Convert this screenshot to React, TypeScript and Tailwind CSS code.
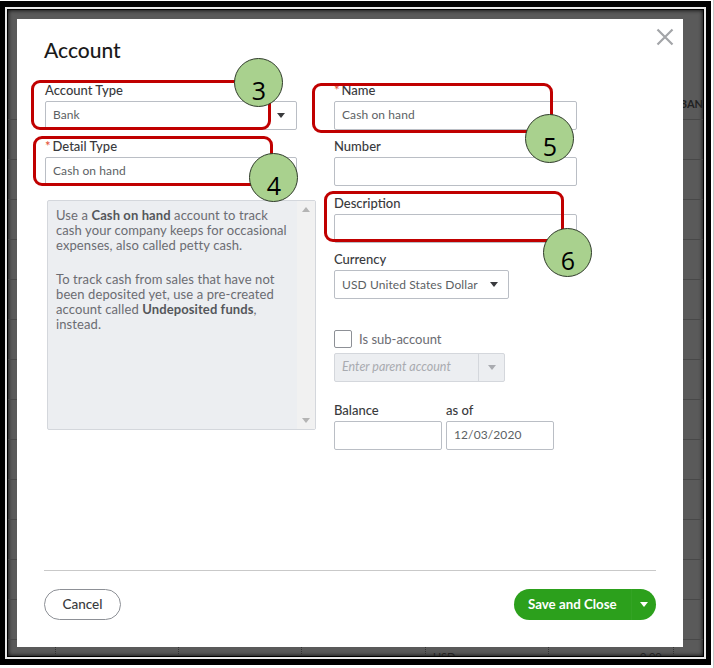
const Caret = ({ className = "" }: { className?: string }) => (
  <svg width="8" height="5" viewBox="0 0 8 5" className={className}>
    <path d="M0 0h8L4 5z" fill="currentColor" />
  </svg>
);

const Label = ({ text, required }: { text: string; required?: boolean }) => (
  <div className="h-[22px] text-[13px] leading-[22px] text-[#393a3d] font-medium whitespace-nowrap">
    {required && <span className="text-[#e2492f] mr-[2px]">*</span>}
    {text}
  </div>
);

const Input = ({ value, className = "" }: { value?: string; className?: string }) => (
  <div
    className={`h-[29px] border border-[#babec5] rounded-[2px] bg-white pl-[7px] text-[12px] tracking-[0.1px] leading-[26px] text-[#5c5f64] ${className}`}
  >
    {value}
  </div>
);

const Callout = ({ className }: { className: string }) => (
  <div className={`absolute border-[3px] border-[#c00000] rounded-[9px] ${className}`} />
);

const Badge = ({ n, className }: { n: number; className: string }) => (
  <div
    className={`absolute w-[49px] h-[49px] rounded-full bg-[#a9d18e] border border-[#2f3b2a] flex items-center justify-center pt-[15px] pl-px text-[25px] leading-none text-black font-['Open_Sans',sans-serif] ${className}`}
  >
    {n}
  </div>
);

export default function App() {
  return (
    <div className="w-[714px] h-[668px] bg-white border-r border-[#c8c8c8] pt-px pr-[2px] pb-[3px] font-['Lato',sans-serif]">
      <div className="w-full h-full bg-black pt-[6px] pr-[5px] pb-[6px] pl-[5px]">
        <div className="w-full h-full border-2 border-[#e8e8e8] bg-black p-px">
          <div className="relative w-full h-full overflow-hidden bg-[#5a5a5a] shadow-[inset_0_0_4px_#000] pl-[9px] pt-[9px]">
            {/* spreadsheet behind the overlay */}
            <div className="absolute inset-x-0 top-[109px] bottom-[8px] bg-[linear-gradient(#484848_1px,transparent_1px)] bg-[length:100%_40px]" />
            <div className="absolute right-0 top-[88px] text-[11px] font-bold text-[#222] leading-none">
              BAN
            </div>
            <div className="absolute left-[47px] bottom-0 h-[9px] border-l border-dotted border-[#333]" />
            <div className="absolute left-[170px] bottom-0 h-[9px] border-l border-dotted border-[#333]" />
            <div className="absolute left-[293px] bottom-0 h-[9px] border-l border-dotted border-[#333]" />
            <div className="absolute left-[417px] bottom-0 h-[9px] border-l border-dotted border-[#333]" />
            <div className="absolute left-[540px] bottom-0 h-[9px] border-l border-dotted border-[#333]" />
            <div className="absolute left-[665px] bottom-0 h-[9px] border-l border-dotted border-[#333]" />
            <div className="absolute left-[425px] top-[641px] text-[11px] leading-none text-[#222]">USD</div>
            <div className="absolute left-[632px] top-[641px] text-[11px] leading-none text-[#222]">0.00</div>

            <div className="relative w-[666px] h-[628px] bg-white px-[27px]">
              <svg
                width="18"
                height="18"
                viewBox="0 0 18 18"
                className="absolute right-[9px] top-[9px] text-[#a3a5a8]"
              >
                <path d="M1.5 1.5l15 15M16.5 1.5l-15 15" stroke="currentColor" strokeWidth="2.2" />
              </svg>

              <h1 className="pt-[18px] h-[60px] text-[21px] leading-[25px] font-medium text-[#1a1a1a]">
                Account
              </h1>

              <div className="flex">
                <div className="w-[253px] pl-px">
                  <Label text="Account Type" />
                  <div className="flex h-[29px] border border-[#babec5] rounded-[2px]">
                    <div className="flex-1 pl-[7px] text-[12px] tracking-[0.1px] leading-[26px] text-[#5c5f64]">Bank</div>
                    <div className="w-[30px] flex items-center justify-center text-[#393a3d]">
                      <Caret />
                    </div>
                  </div>
                  <div className="h-[5px]" />
                  <Label text="Detail Type" required />
                  <Input value="Cash on hand" />
                  <div className="ml-[2px] mt-[14px] w-[269px] h-[230px] flex border border-[#d4d7dc] rounded-[2px] bg-[#eceef1]">
                    <div className="flex-1 pl-2 pt-[7px] text-[13px] tracking-[0.1px] leading-[15px] text-[#6b6c72]">
                      <p className="whitespace-nowrap">
                        Use a <b className="font-bold text-[#55575b]">Cash on hand</b> account to track
                        <br />
                        cash your company keeps for occasional
                        <br />
                        expenses, also called petty cash.
                      </p>
                      <p className="mt-[19px] whitespace-nowrap">
                        To track cash from sales that have not
                        <br />
                        been deposited yet, use a pre-created
                        <br />
                        account called <b className="font-bold text-[#55575b]">Undeposited funds</b>,
                        <br />
                        instead.
                      </p>
                    </div>
                    <div className="w-[18px] bg-[#f1f1f1] flex flex-col items-center justify-between py-[6px] text-[#b4b4b4]">
                      <Caret className="rotate-180" />
                      <Caret />
                    </div>
                  </div>
                </div>

                <div className="ml-[37px] w-[243px]">
                  <Label text="Name" required />
                  <Input value="Cash on hand" />
                  <div className="h-[5px]" />
                  <Label text="Number" />
                  <Input />
                  <div className="h-[6px]" />
                  <Label text="Description" />
                  <Input />
                  <div className="h-[5px]" />
                  <Label text="Currency" />
                  <div className="flex items-center justify-between w-[175px] h-[29px] border border-[#babec5] rounded-[2px] pl-[7px] pr-[10px] text-[12px] tracking-[0.1px] text-[#5c5f64]">
                    USD United States Dollar
                    <Caret className="text-[#393a3d]" />
                  </div>
                  <div className="mt-[31px] flex items-center h-[18px]">
                    <div className="w-[18px] h-[18px] border border-[#8d9096] rounded-[2px] bg-white" />
                    <span className="ml-[7px] pt-[2px] text-[13px] text-[#6b6c72]">Is sub-account</span>
                  </div>
                  <div className="mt-[5px] flex w-[171px] h-[29px] border border-[#d4d7dc] rounded-[2px] bg-[#eceef1]">
                    <div className="flex-1 pl-[7px] text-[12.5px] italic leading-[26px] text-[#a9abb0]">
                      Enter parent account
                    </div>
                    <div className="w-[26px] border-l border-[#d4d7dc] flex items-center justify-center text-[#a9abb0]">
                      <Caret />
                    </div>
                  </div>
                  <div className="mt-[17px] flex gap-1">
                    <div className="w-[108px]">
                      <Label text="Balance" />
                      <Input />
                    </div>
                    <div className="w-[108px]">
                      <Label text="as of" />
                      <Input value="12/03/2020" />
                    </div>
                  </div>
                </div>
              </div>

              <div className="mt-[120px] h-px bg-[#c9c9c9]" />

              <div className="mt-[18px] flex items-center justify-between">
                <button className="w-[77px] h-[31px] rounded-full border border-[#8d9096] text-[13.5px] font-medium text-[#393a3d]">
                  Cancel
                </button>
                <div className="flex h-[31px] w-[142px] rounded-full bg-[#2ca01c] text-white">
                  <div className="w-[117px] pl-[14px] text-[13.3px] font-bold leading-[30px] whitespace-nowrap">
                    Save and Close
                  </div>
                  <div className="flex-1 flex items-center justify-center pr-[1px] border-l border-[#33a324]">
                    <Caret />
                  </div>
                </div>
              </div>

              <Callout className="left-[14px] top-[61px] w-[240px] h-[50px]" />
              <Callout className="left-[16px] top-[117px] w-[240px] h-[50px]" />
              <Callout className="left-[295px] top-[64px] w-[241px] h-[50px]" />
              <Callout className="left-[307px] top-[172px] w-[240px] h-[51px]" />
              <Badge n={3} className="left-[217px] top-[39px]" />
              <Badge n={4} className="left-[232px] top-[134px]" />
              <Badge n={5} className="left-[508px] top-[95px]" />
              <Badge n={6} className="left-[526px] top-[209px]" />
            </div>
          </div>
        </div>
      </div>
    </div>
  );
}
